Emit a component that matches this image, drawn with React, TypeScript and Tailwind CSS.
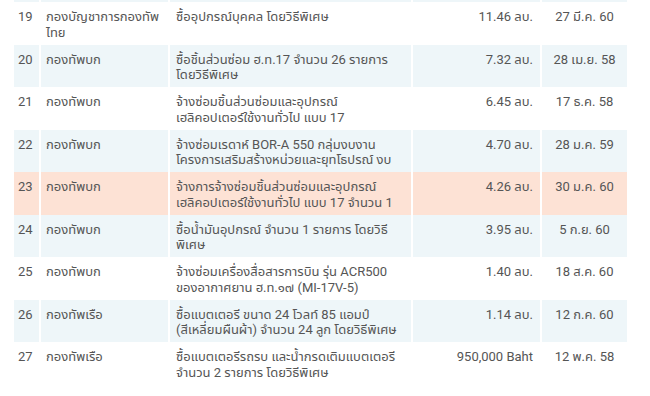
import React from "react";

type Row = { n: string; org: string[]; desc: string[]; amt: string; date: string; bg: string };

const rows: Row[] = [
  { n: "19", org: ["กองบัญชาการกองทัพ", "ไทย"], desc: ["ซื้ออุปกรณ์บุคคล โดยวิธีพิเศษ"], amt: "11.46 ลบ.", date: "27 มี.ค. 60", bg: "bg-white" },
  { n: "20", org: ["กองทัพบก"], desc: ["ซื้อชิ้นส่วนซ่อม ฮ.ท.17 จำนวน 26 รายการ", "โดยวิธีพิเศษ"], amt: "7.32 ลบ.", date: "28 เม.ย. 58", bg: "bg-[#eef6f9]" },
  { n: "21", org: ["กองทัพบก"], desc: ["จ้างซ่อมชิ้นส่วนซ่อมและอุปกรณ์", "เฮลิคอปเตอร์ใช้งานทั่วไป แบบ 17"], amt: "6.45 ลบ.", date: "17 ธ.ค. 58", bg: "bg-white" },
  { n: "22", org: ["กองทัพบก"], desc: ["จ้างซ่อมเรดาห์ BOR-A 550 กลุ่มงบงาน", "โครงการเสริมสร้างหน่วยและยุทโธปรณ์ งบ"], amt: "4.70 ลบ.", date: "28 ม.ค. 59", bg: "bg-[#eef6f9]" },
  { n: "23", org: ["กองทัพบก"], desc: ["จ้างการจ้างซ่อมชิ้นส่วนซ่อมและอุปกรณ์", "เฮลิคอปเตอร์ใช้งานทั่วไป แบบ 17 จำนวน 1"], amt: "4.26 ลบ.", date: "30 ม.ค. 60", bg: "bg-[#fde2d5]" },
  { n: "24", org: ["กองทัพบก"], desc: ["ซื้อน้ำมันอุปกรณ์ จำนวน 1 รายการ โดยวิธี", "พิเศษ"], amt: "3.95 ลบ.", date: "5 ก.ย. 60", bg: "bg-[#eef6f9]" },
  { n: "25", org: ["กองทัพบก"], desc: ["จ้างซ่อมเครื่องสื่อสารการบิน รุ่น ACR500", "ของอากาศยาน ฮ.ท.๑๗ (MI-17V-5)"], amt: "1.40 ลบ.", date: "18 ส.ค. 60", bg: "bg-white" },
  { n: "26", org: ["กองทัพเรือ"], desc: ["ซื้อแบตเตอรี ขนาด 24 โวลท์ 85 แอมป์", "(สีเหลี่ยมผืนผ้า) จำนวน 24 ลูก โดยวิธีพิเศษ"], amt: "1.14 ลบ.", date: "12 ก.ค. 60", bg: "bg-[#eef6f9]" },
  { n: "27", org: ["กองทัพเรือ"], desc: ["ซื้อแบตเตอรีรถรบ และน้ำกรดเติมแบตเตอรี", "จำนวน 2 รายการ โดยวิธีพิเศษ"], amt: "950,000 Baht", date: "12 พ.ค. 58", bg: "bg-white" },
];

function Lines({ l }: { l: string[] }) {
  return (
    <>
      {l.map((t, i) => (
        <div key={i} className="whitespace-nowrap">{t}</div>
      ))}
    </>
  );
}

export default function App() {
  return (
    <div
      className="w-[650px] h-[396px] overflow-hidden bg-white text-[13px] leading-[15.5px] text-[#555555]"
      style={{ fontFamily: "Roboto, 'Noto Sans Thai', Tahoma, 'DejaVu Sans', sans-serif" }}
    >
      <div className="ml-[14px] w-[613px] -mt-[40.5px]">
        {[{ n: "", org: [], desc: [], amt: "", date: "", bg: "bg-[#eef6f9]" } as Row, ...rows].map((r, i) => (
          <div key={i} className={`flex h-[42.5px] ${r.bg}`}>
            <div className="w-[25px] pl-[4px] pt-[7px] overflow-hidden">{r.n}</div>
            <div className="w-[2px] bg-white" />
            <div className="w-[127px] pl-[5px] pt-[7px] overflow-hidden">
              <Lines l={r.org} />
            </div>
            <div className="w-[2px] bg-white" />
            <div className="w-[241px] pl-[6px] pt-[7px] overflow-hidden">
              <Lines l={r.desc} />
            </div>
            <div className="w-[2px] bg-white" />
            <div className="w-[127px] pr-[7px] pt-[7px] text-right whitespace-nowrap">{r.amt}</div>
            <div className="w-[2px] bg-white" />
            <div className="flex-1 pt-[7px] text-center whitespace-nowrap">{r.date}</div>
          </div>
        ))}
      </div>
    </div>
  );
}
